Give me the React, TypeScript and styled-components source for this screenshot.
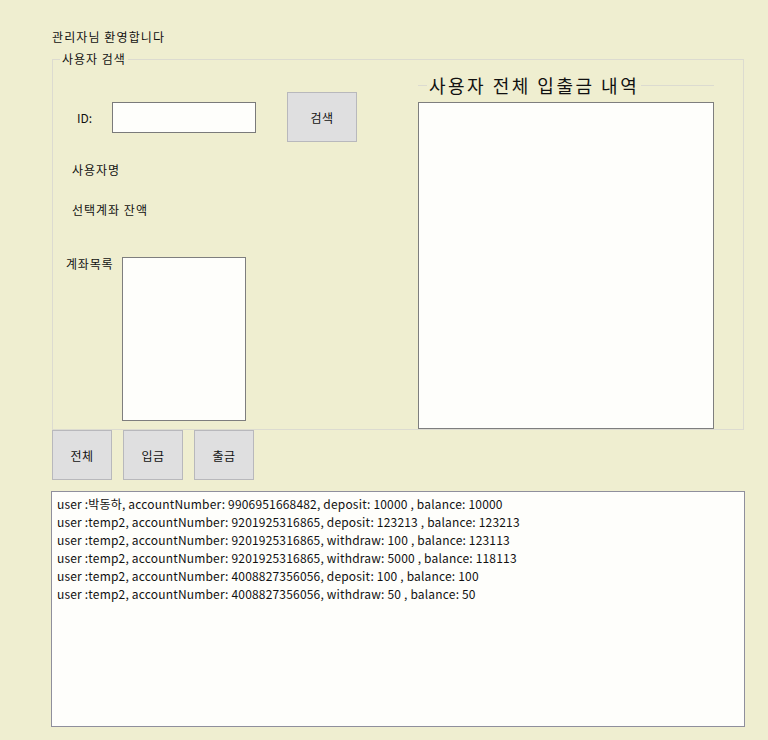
import React from "react";
import styled, { createGlobalStyle } from "styled-components";

const Global = createGlobalStyle`
  html, body { margin: 0; padding: 0; }
  body {
    width: 768px;
    height: 740px;
    overflow: hidden;
    font-family: "Noto Sans CJK KR", "Noto Sans", sans-serif;
    font-size: 12px;
    color: #111;
    background-color: #efeed0;
  }
`;

const Page = styled.div`
  padding: 29px 0 0 52px;
  display: flex;
  flex-direction: column;
`;

const Welcome = styled.div`
  height: 16px;
  line-height: 16px;
  font-size: 12px;
  letter-spacing: 1.1px;
`;

const GroupBox = styled.fieldset`
  margin: 7px 0 0 0;
  padding: 0;
  width: 692px;
  height: 378px;
  box-sizing: border-box;
  border: 1px solid #dcdbd0;
  display: flex;
  min-width: 0;
`;

const Legend = styled.legend<{ $big?: boolean }>`
  margin-left: ${(p) => (p.$big ? "9px" : "7px")};
  padding: 0 2px;
  font-size: ${(p) => (p.$big ? "18px" : "12px")};
  line-height: ${(p) => (p.$big ? "22px" : "14px")};
  letter-spacing: ${(p) => (p.$big ? "2.5px" : "1px")};
  color: #111;
`;

const LeftCol = styled.div`
  width: 365px;
  display: flex;
  flex-direction: column;
`;

const SearchRow = styled.div`
  display: flex;
  align-items: center;
  margin-top: 26px;
  height: 50px;
`;

const Label = styled.span<{ $w?: number }>`
  font-size: 12px;
  white-space: nowrap;
  overflow: hidden;
  letter-spacing: 1px;
  ${(p) => (p.$w ? `width: ${p.$w}px;` : "")}
`;

const IdLabel = styled(Label)`
  margin-left: 24px;
  width: 35px;
  letter-spacing: 0;
`;

const TextBox = styled.div`
  width: 144px;
  height: 31px;
  box-sizing: border-box;
  border: 1px solid #7a7a7a;
  background: #fefefb;
`;

const Button = styled.button<{ $w: number; $h: number }>`
  width: ${(p) => p.$w}px;
  height: ${(p) => p.$h}px;
  box-sizing: border-box;
  border: 1px solid #b8b8bc;
  background: #dfdfe0;
  font-family: "Noto Sans CJK KR", sans-serif;
  font-size: 12px;
  letter-spacing: 0.5px;
  color: #111;
  padding: 0;
  margin: 0;
`;

const SearchButton = styled(Button)`
  margin-left: 31px;
`;

const InfoLine = styled.div<{ $top: number }>`
  margin: ${(p) => p.$top}px 0 0 19px;
  height: 16px;
  line-height: 16px;
  display: flex;
`;

const AccountRow = styled.div`
  display: flex;
  margin: 39px 0 0 13px;
  align-items: flex-start;
  gap: 6px;
`;

const AccountLabel = styled.span`
  font-size: 12px;
  line-height: 14px;
  letter-spacing: 0.8px;
  width: 50px;
  white-space: nowrap;
`;

const ListBox = styled.div<{ $w: number; $h: number }>`
  width: ${(p) => p.$w}px;
  height: ${(p) => p.$h}px;
  box-sizing: border-box;
  border: 1px solid #7e7e7e;
  background: #fefefb;
`;

const RightGroup = styled.fieldset`
  margin: 8px 0 0 0;
  padding: 0;
  width: 296px;
  border: none;
  border-top: 1px solid #dcdbd0;
  min-width: 0;
  display: flex;
  flex-direction: column;
`;

const RightList = styled(ListBox)`
  margin-top: 6px;
`;

const ButtonRow = styled.div`
  display: flex;
  gap: 11px;
`;

const LogBox = styled.div`
  margin: 11px 0 0 -1px;
  width: 694px;
  height: 236px;
  box-sizing: border-box;
  border: 1px solid #8f8f9c;
  background: #fefefb;
  padding: 3px 0 0 5px;
  font-size: 12px;
  line-height: 18px;
  letter-spacing: 0.18px;
`;

const LogLine = styled.div`
  white-space: nowrap;
`;

const logs = [
  "user :박동하, accountNumber: 9906951668482, deposit: 10000 , balance: 10000",
  "user :temp2, accountNumber: 9201925316865, deposit: 123213 , balance: 123213",
  "user :temp2, accountNumber: 9201925316865, withdraw: 100 , balance: 123113",
  "user :temp2, accountNumber: 9201925316865, withdraw: 5000 , balance: 118113",
  "user :temp2, accountNumber: 4008827356056, deposit: 100 , balance: 100",
  "user :temp2, accountNumber: 4008827356056, withdraw: 50 , balance: 50",
];

export default function App() {
  return (
    <>
      <Global />
      <Page>
        <Welcome>관리자님 환영합니다</Welcome>
        <GroupBox>
          <Legend>사용자 검색</Legend>
          <LeftCol>
            <SearchRow>
              <IdLabel>ID:</IdLabel>
              <TextBox />
              <SearchButton $w={70} $h={50}>검색</SearchButton>
            </SearchRow>
            <InfoLine $top={20}>
              <Label>사용자명</Label>
            </InfoLine>
            <InfoLine $top={24}>
              <Label $w={76}>선택계좌 잔액</Label>
            </InfoLine>
            <AccountRow>
              <AccountLabel>계좌목록</AccountLabel>
              <ListBox $w={124} $h={164} />
            </AccountRow>
          </LeftCol>
          <RightGroup>
            <Legend $big>사용자 전체 입출금 내역</Legend>
            <RightList $w={296} $h={327} />
          </RightGroup>
        </GroupBox>
        <ButtonRow>
          <Button $w={60} $h={50}>전체</Button>
          <Button $w={60} $h={50}>입금</Button>
          <Button $w={60} $h={50}>출금</Button>
        </ButtonRow>
        <LogBox>
          {logs.map((l, i) => (
            <LogLine key={i}>{l}</LogLine>
          ))}
        </LogBox>
      </Page>
    </>
  );
}
